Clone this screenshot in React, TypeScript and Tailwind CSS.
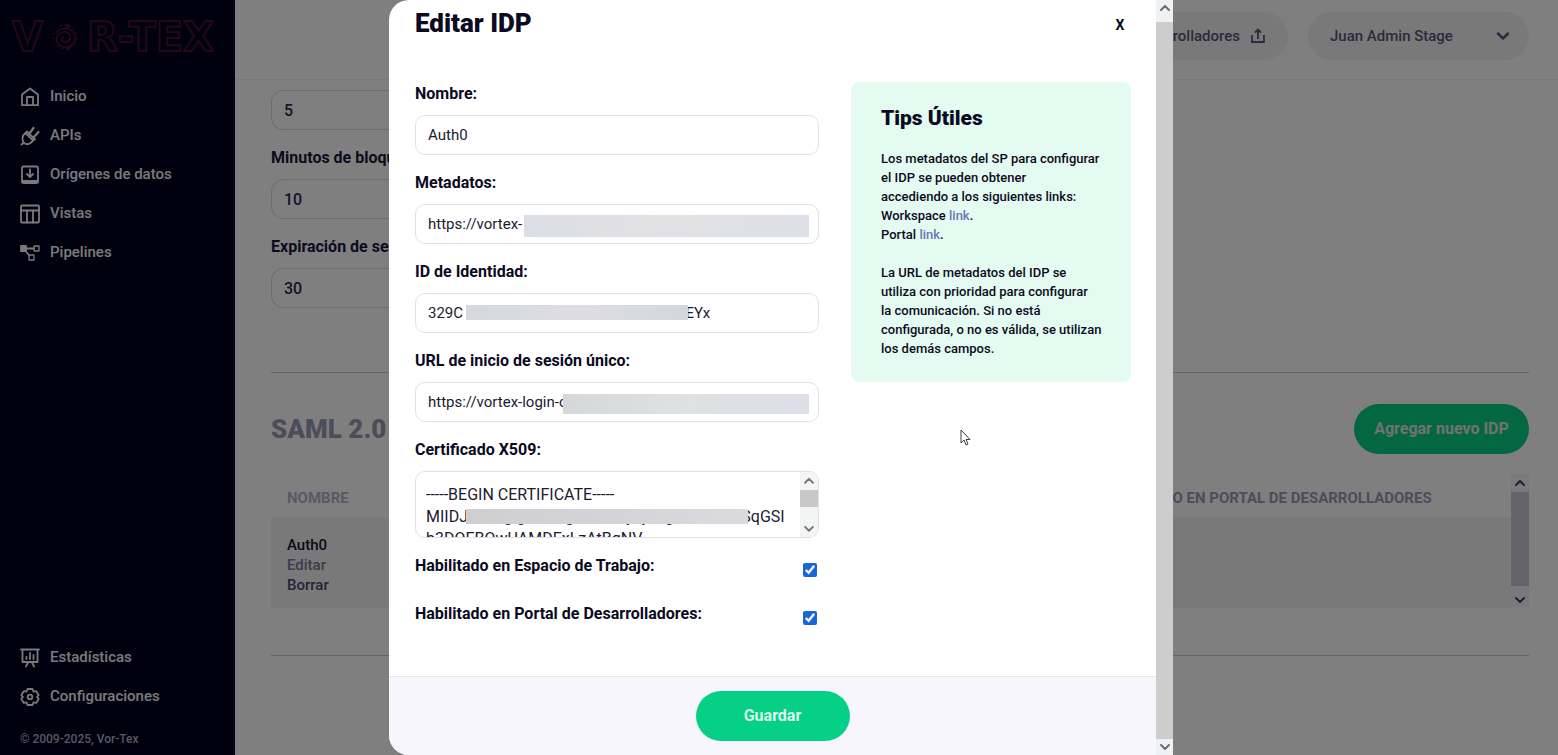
import { useState } from 'react'
import type { ReactNode } from 'react'
import { ChevronDown, ChevronUp } from 'lucide-react'

const gap = (n: number) => '\u00a0'.repeat(n)

const ENTITY_ID = `329C${gap(33)}Q${gap(24)}EYx`

const CERTIFICATE = [
  '-----BEGIN CERTIFICATE-----',
  `MIIDJ${gap(9)}g${gap(1)}g${gap(10)}g${gap(13)}y${gap(2)}y${gap(4)}g${gap(17)}SqGSI`,
  'b3DQEBQwUAMDExLzAtBgNV',
].join('\n')

function Icon({ children }: { children: ReactNode }) {
  return (
    <svg
      viewBox="0 0 20 20"
      className="size-5 shrink-0"
      fill="none"
      stroke="currentColor"
      strokeWidth="1.8"
      strokeLinecap="round"
      strokeLinejoin="round"
      aria-hidden
    >
      {children}
    </svg>
  )
}

const MAIN_NAV = [
  {
    label: 'Inicio',
    icon: (
      <Icon>
        <path d="M2 18.200V7.500L10 1.500l8 6v10.700H2z" />
        <path d="M7 18v-8h6v8" />
      </Icon>
    ),
  },
  {
    label: 'APIs',
    icon: (
      <Icon>
        <path d="M5.500 7 13 14.500c-2 3.500-6 4.500-9 2.500C1.500 14 2 9.500 5.500 7z" />
        <path d="M9 8l4.500-6M13 12l5.500-6" strokeWidth="2.200" />
        <path d="M5.500 7 7 5.500l8 8-2 1M3.500 17l-2 1.500" />
      </Icon>
    ),
  },
  {
    label: 'Orígenes de datos',
    icon: (
      <Icon>
        <rect x="2" y="1.500" width="16" height="16.500" rx="1.500" />
        <path d="M10 4.500v7M7 9l3 3 3-3" />
        <path d="M2.500 16.500h15" strokeWidth="3" />
      </Icon>
    ),
  },
  {
    label: 'Vistas',
    icon: (
      <Icon>
        <rect x="1" y="1.500" width="18" height="17" rx="1" />
        <path d="M1 6.500h18M7 6.500v12M13 6.500v12" />
      </Icon>
    ),
  },
  {
    label: 'Pipelines',
    icon: (
      <Icon>
        <rect x="1" y="3" width="5" height="5" fill="currentColor" />
        <rect x="14" y="3" width="5" height="5" strokeWidth="1.300" />
        <rect x="9" y="12" width="5" height="5" strokeWidth="1.300" />
        <path d="M6 5.500h8M5 7.500l4.500 5" />
      </Icon>
    ),
  },
]

const BOTTOM_NAV = [
  {
    label: 'Estadísticas',
    icon: (
      <Icon>
        <path d="M1 1.500h18M2.500 1.500V14h15V1.500M8 14.500l-2 4M12 14.500l2 4M6.500 11V9M10 11V5M13.500 11V7" />
      </Icon>
    ),
  },
  {
    label: 'Configuraciones',
    icon: (
      <Icon>
        <path d="M7.500 2h5l1 2.600 2.700-.4 2.500 4L17 10l1.700 1.900-2.500 4-2.700-.5-1 2.600h-5l-1-2.600-2.700.5-2.500-4L3 10 1.300 8.200l2.500-4 2.700.4z" />
        <circle cx="10" cy="10" r="2.300" />
      </Icon>
    ),
  },
]

function NavList({ items }: { items: typeof MAIN_NAV }) {
  return (
    <ul>
      {items.map((item) => (
        <li key={item.label}>
          <a href="#" className="flex h-[39px] items-center gap-2.5 pl-5 text-[15px] font-medium text-[#f4f4f6]">
            {item.icon}
            {item.label}
          </a>
        </li>
      ))}
    </ul>
  )
}

function Logo() {
  return (
    <div className="flex h-[77px] items-center gap-1 pb-1 pl-3 font-['DejaVu_Sans'] text-[40px] leading-none font-bold text-transparent [-webkit-text-stroke:2px_#48102c]">
      <span>V</span>
      <svg viewBox="0 0 36 36" className="size-9 shrink-0" fill="none" stroke="#56142f" aria-hidden>
        <circle cx="18" cy="18" r="16" strokeDasharray="1 3" />
        <circle cx="18" cy="18" r="12" strokeDasharray="3 2" />
        <path d="M9 15c2-6 12-8 17-2s1 14-6 15-12-5-10-10 9-7 12-3 0 8-4 8-4-5-1-5" strokeWidth="1.500" />
        <path d="M20 5l3 2-3 2zM24 29l-4 2 1-4z" fill="#56142f" />
      </svg>
      <span>R-TEX</span>
    </div>
  )
}

function Sidebar() {
  return (
    <aside className="flex w-[235px] shrink-0 flex-col bg-[#00001c]">
      <Logo />
      <nav className="flex flex-1 flex-col justify-between">
        <NavList items={MAIN_NAV} />
        <NavList items={BOTTOM_NAV} />
      </nav>
      <p className="pt-[15px] pb-2 pl-5 text-xs leading-4 font-medium text-[#b0b0b8]">© 2009-2025, Vor-Tex</p>
    </aside>
  )
}

function SettingField({ id, label, value }: { id: string; label?: string; value: string }) {
  return (
    <div>
      {label && (
        <label htmlFor={id} className="mb-[9px] block text-base leading-6 font-bold text-[#18163c]">
          {label}
        </label>
      )}
      <input
        id={id}
        aria-label={label ?? 'Intentos'}
        defaultValue={value}
        className="h-10 w-full rounded-xl border border-[#d8d8e0] px-3 text-base font-medium text-[#2a2850]"
      />
    </div>
  )
}

function SettingsPage() {
  return (
    <div className="flex min-w-0 flex-1 flex-col bg-white">
      <header className="flex h-20 shrink-0 items-start justify-end gap-5 border-b border-[#f0f0f2] pt-3 pr-[29px]">
        <a
          href="#"
          className="flex h-12 items-center gap-2.5 rounded-full bg-[#f3f3f3] px-[22px] text-[15px] font-medium text-[#58547c]"
        >
          Desarrolladores
          <svg viewBox="0 0 16 16" className="size-4" fill="none" stroke="currentColor" strokeWidth="1.800" aria-hidden>
            <path d="M2 7v7h12V7M8 11V2M5 4.500 8 1.500l3 3" />
          </svg>
        </a>
        <button className="flex h-12 w-[221px] items-center justify-between rounded-full bg-[#f3f3f3] pr-4 pl-[22px] text-[15px] font-medium text-[#58547c]">
          Juan Admin Stage
          <ChevronDown className="size-5" strokeWidth={3} />
        </button>
      </header>

      <main className="pt-[10px] pr-[29px] pl-9">
        <div className="flex w-1/2 flex-col gap-4">
          <SettingField id="attempts" value="5" />
          <SettingField id="block" label="Minutos de bloqueo:" value="10" />
          <SettingField id="session" label="Expiración de sesión:" value="30" />
        </div>

        <hr className="mt-16 border-[#c4c6da]" />

        <div className="mt-[31px] flex items-center justify-between">
          <h2 className="text-[26px] leading-8 font-black text-[#9a98b4]">SAML 2.0</h2>
          <button className="h-[50px] w-[175px] rounded-full bg-[#06ce82] text-base font-bold text-[#e4e4e8]">
            Agregar nuevo IDP
          </button>
        </div>

        <div className="mt-5 flex">
          <table className="flex-1 text-left">
            <thead>
              <tr className="h-11 text-[15px] text-[#9a98b8]">
                <th className="w-[826px] pt-1 pl-4 font-bold text-[#b4b2ca]">NOMBRE</th>
                <th className="pt-1 font-bold whitespace-nowrap">HABILITADO EN PORTAL DE DESARROLLADORES</th>
              </tr>
            </thead>
            <tbody>
              <tr className="h-[90px] bg-[#f3f3f3]">
                <td className="pt-1 pl-4 text-[15px] leading-5 font-medium text-[#4c4870]">
                  <span className="block text-[#14122c]">Auth0</span>
                  <a href="#" className="block text-[#7a7896]">
                    Editar
                  </a>
                  <a href="#" className="block">
                    Borrar
                  </a>
                </td>
                <td />
              </tr>
            </tbody>
          </table>
          <div className="flex w-[18px] flex-col items-center bg-[#f5f5f8]">
            <ChevronUp className="my-px size-4 text-[#403c68]" strokeWidth={3} />
            <span className="h-[94px] w-full bg-[#c8c8d4]" />
            <ChevronDown className="mt-1.5 size-4 text-[#403c68]" strokeWidth={3} />
          </div>
        </div>

        <hr className="mt-[47px] border-[#c4c6da]" />
      </main>
    </div>
  )
}

interface FieldProps {
  id: string
  label: string
  value: string
  children?: ReactNode
}

function Field({ id, label, value, children }: FieldProps) {
  return (
    <div>
      <label htmlFor={id} className="mb-[9px] block text-base leading-6 font-bold">
        {label}
      </label>
      <div className="relative">
        <input
          id={id}
          defaultValue={value}
          className="h-10 w-full rounded-[10px] border border-[#dde3e3] px-3 text-[15px] text-[#1c1a30] outline-none"
        />
        {children}
      </div>
    </div>
  )
}

function CheckRow({ id, label }: { id: string; label: string }) {
  const [checked, setChecked] = useState(true)
  return (
    <div className="flex items-center justify-between">
      <label htmlFor={id} className="text-base leading-6 font-bold">
        {label}
      </label>
      <input
        id={id}
        type="checkbox"
        checked={checked}
        onChange={() => setChecked(!checked)}
        className="mt-2 mr-0.5 size-3.5 accent-[#1765d8]"
      />
    </div>
  )
}

function Tips() {
  return (
    <aside className="self-start rounded-lg bg-[#e4fbf1] px-[30px] py-6 whitespace-nowrap">
      <h3 className="mb-[19px] text-[21px] leading-6 font-black">Tips Útiles</h3>
      <p className="text-[13px] leading-[19px] font-medium">
        Los metadatos del SP para configurar
        <br />
        el IDP se pueden obtener
        <br />
        accediendo a los siguientes links:
        <br />
        Workspace{' '}
        <a href="#" className="text-[#6878b4]">
          link
        </a>
        .
        <br />
        Portal{' '}
        <a href="#" className="text-[#6878b4]">
          link
        </a>
        .
      </p>
      <p className="mt-[19px] text-[13px] leading-[19px] font-medium">
        La URL de metadatos del IDP se
        <br />
        utiliza con prioridad para configurar
        <br />
        la comunicación. Si no está
        <br />
        configurada, o no es válida, se utilizan
        <br />
        los demás campos.
      </p>
    </aside>
  )
}

function EditIdpModal() {
  return (
    <div role="dialog" aria-label="Editar IDP" className="flex h-full w-[784px] text-[#0c0a22]">
      <div className="flex min-w-0 flex-1 flex-col overflow-hidden rounded-l-[20px] bg-white">
        <div className="flex h-[46px] shrink-0 items-center justify-between pr-[30px] pl-[26px]">
          <h2 className="text-[26px] leading-8 font-black">Editar IDP</h2>
          <button aria-label="Cerrar" className="w-3 pt-1 text-sm font-bold">
            X
          </button>
        </div>

        <form className="grid flex-1 grid-cols-[1fr_280px] content-start gap-8 pt-9 pr-[25px] pl-[26px]">
          <div className="flex flex-col gap-4">
            <Field id="name" label="Nombre:" value="Auth0" />
            <Field id="metadata" label="Metadatos:" value="https://vortex-">
              <span className="absolute top-[11px] right-[10px] left-[109px] h-[22px] bg-linear-to-r from-[#dcdee5] via-[#e2e2e4] to-[#dde0e6]" />
            </Field>
            <Field id="entity" label="ID de Identidad:" value={ENTITY_ID}>
              <span className="absolute top-[12px] left-[51px] h-[15px] w-[222px] bg-linear-to-r from-[#d6d8df] via-[#dedee0] to-[#d4d7de]" />
            </Field>
            <Field id="sso" label="URL de inicio de sesión único:" value="https://vortex-login-c">
              <span className="absolute top-[12px] right-[10px] left-[148px] h-[20px] bg-linear-to-r from-[#d6d7da] via-[#e0e1e3] to-[#dcdfe8]" />
            </Field>
            <div>
              <label htmlFor="cert" className="mb-[9px] block text-base leading-6 font-bold">
                Certificado X509:
              </label>
              <div className="relative flex h-[67px] overflow-hidden rounded-[10px] border border-[#dde3e3]">
                <textarea
                  id="cert"
                  defaultValue={CERTIFICATE}
                  className="min-w-0 flex-1 resize-none overflow-hidden pt-3 pl-2.5 text-base leading-[22px] text-[#1c1a30] outline-none"
                />
                <div className="flex w-[18px] flex-col items-center bg-[#f3f5f5]">
                  <ChevronUp className="my-px size-4 text-[#77777c]" strokeWidth={3} />
                  <span className="h-[18px] w-full bg-[#c8c8c8]" />
                  <ChevronDown className="mt-3.5 size-4 text-[#77777c]" strokeWidth={3} />
                </div>
                <span className="absolute top-[37px] left-[50px] h-[15px] w-[282px] bg-linear-to-r from-[#cfcfd1] via-[#d2d4da] to-[#d9dbdf]" />
              </div>
            </div>
            <div className="flex flex-col gap-6">
              <CheckRow id="workspace" label="Habilitado en Espacio de Trabajo:" />
              <CheckRow id="portal" label="Habilitado en Portal de Desarrolladores:" />
            </div>
          </div>
          <Tips />
        </form>

        <footer className="flex h-[79px] shrink-0 items-center justify-center border-t border-[#e6e5ee] bg-[#f7f6fd]">
          <button className="h-[50px] w-[154px] rounded-full bg-[#06cf86] text-base font-bold text-[#dcf9ec]">
            Guardar
          </button>
        </footer>
      </div>

      <div className="flex w-[17px] flex-col items-center justify-between bg-[#eef2f2]">
        <ChevronUp className="size-4 text-[#6c6c72]" strokeWidth={3} />
        <span className="mt-1.5 w-full flex-1 bg-[#cdcdcd]" />
        <ChevronDown className="size-4 text-[#6c6c72]" strokeWidth={3} />
      </div>
    </div>
  )
}

export default function App() {
  return (
    <div className="relative flex h-screen overflow-hidden font-[Roboto,sans-serif]">
      <Sidebar />
      <SettingsPage />

      {/* Dimmed backdrop with the dialog on top */}
      <div className="absolute inset-0 flex justify-center bg-black/50 pl-1">
        <EditIdpModal />
      </div>

      {/* Mouse pointer */}
      <svg viewBox="0 0 11 17" className="absolute top-[429px] left-[960px] h-[17px] w-[11px]" aria-hidden>
        <path d="M1 1v13l3-3 2 5 2-1-2-4.500h4z" fill="#fff" stroke="#3c3c48" />
      </svg>
    </div>
  )
}
